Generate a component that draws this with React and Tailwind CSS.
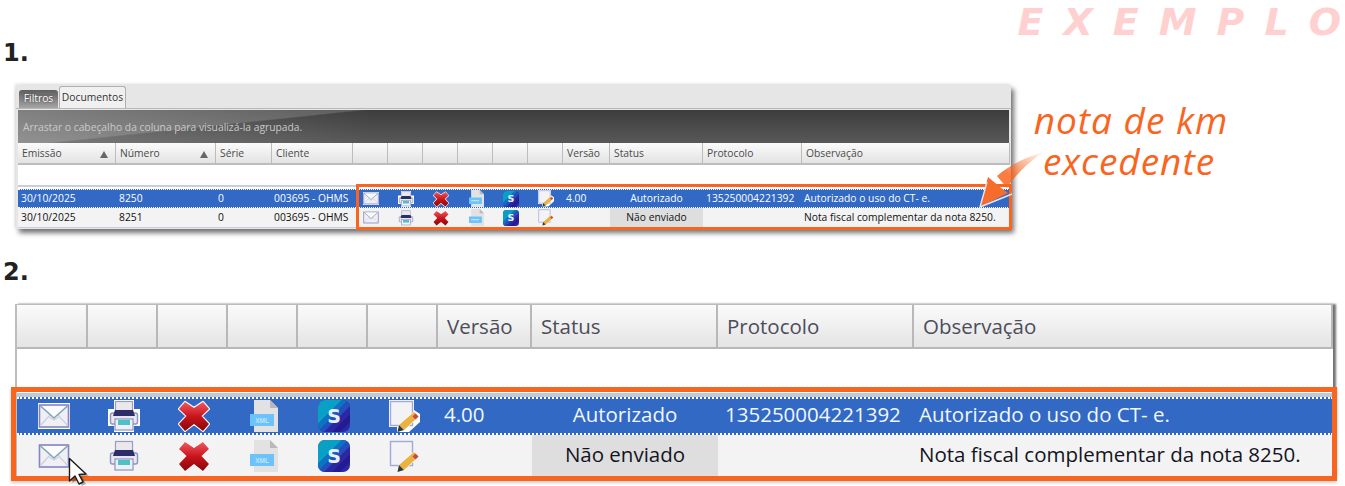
import React from "react";

const FONT = "[font-family:'Open_Sans','Liberation_Sans',sans-serif]";

function Mail({ sel }) {
  return (
    <svg viewBox="0 0 32 26" className="w-full h-auto block">
      {sel && <rect x="0" y="0" width="32" height="26" fill="#fff" />}
      <rect x="1.5" y="2" width="29" height="22" fill="#f0f0f4" stroke="#8583c4" strokeWidth="1.6" />
      <path d="M2 23 L12 12 M30 23 L20 12" stroke="#c9cfe0" strokeWidth="1.2" fill="none" />
      <path d="M2.5 3 L16 15 L29.5 3" stroke="#7fa6b8" strokeWidth="1.6" fill="#fbfbfb" />
      <path d="M11 14 L16 17 L21 14" stroke="#d0d0e0" strokeWidth="1.4" fill="none" />
    </svg>
  );
}

function Printer({ sel }) {
  return (
    <svg viewBox="0 0 32 32" className="w-full h-auto block">
      {sel && <path d="M6 0 H26 V9 H32 V26 H26 V32 H6 V26 H0 V9 H6 Z" fill="#fff" />}
      <rect x="7.5" y="1.5" width="17" height="13" fill="#e9e9ec" stroke="#9a9cc4" strokeWidth="1.2" />
      <rect x="2.5" y="13" width="27" height="11" rx="2" fill="#e6e6ee" stroke="#8f93c2" strokeWidth="1.4" />
      <path d="M7 10 H25 L27 16 H5 Z" fill="#2c2e6a" />
      <rect x="7" y="19" width="18" height="11" fill="#eef0f4" stroke="#8f93c2" strokeWidth="1.2" />
      <rect x="10" y="20" width="12" height="5" fill="#4cc2c6" />
    </svg>
  );
}

function Cross({ sel }) {
  return (
    <svg viewBox="0 0 32 32" className="w-full h-auto block">
      <defs>
        <linearGradient id={sel ? "xa" : "xb"} x1="0" y1="0" x2="0" y2="1" gradientUnits="objectBoundingBox">
          <stop offset="0" stopColor="#f0585e" />
          <stop offset="0.5" stopColor="#c9141c" />
          <stop offset="1" stopColor="#860808" />
        </linearGradient>
      </defs>
      <path
        d="M7 2 L16 8 L25 2 L31 9 L23.5 16 L31 24 L25 31 L16 24 L7 31 L1 24 L8.5 16 L1 9 Z"
        fill={`url(#${sel ? "xa" : "xb"})`}
        stroke="#fff"
        strokeWidth={sel ? "2.2" : "1.2"}
        strokeLinejoin="round"
        paintOrder="stroke"
      />
    </svg>
  );
}

function XmlDoc({ big }) {
  return (
    <svg viewBox="0 0 28 32" className="w-full h-auto block">
      <path d="M4 0 H20 L28 8 V32 H4 Z" fill="#e2e2e2" />
      <path d="M20 0 L28 8 H20 Z" fill="#b9b9b9" />
      <rect x="0" y="14" width="24" height="12" fill="#6cc2fa" />
      {big && (
        <text x="12" y="22.5" textAnchor="middle" fontSize="6.5" fontWeight="700" fill="#bfe5fd" fontFamily="Liberation Sans, sans-serif">
          XML
        </text>
      )}
      {!big && <rect x="4" y="19" width="15" height="2" fill="#c6e8fd" />}
    </svg>
  );
}

function SBadge({ id }) {
  return (
    <svg viewBox="0 0 32 32" className="w-full h-auto block">
      <defs>
        <clipPath id={id}>
          <rect x="0" y="0" width="32" height="32" rx="7" />
        </clipPath>
      </defs>
      <g clipPath={`url(#${id})`}>
        <rect width="32" height="32" fill="#2b28a6" />
        <path d="M0 0 H24 L0 24 Z" fill="#0aa0c6" />
        <path d="M24 0 H30 L0 32 V24 Z" fill="#0d74c4" />
        <path d="M30 0 H32 V6 L6 32 H0 Z" fill="#2350bd" />
        <path d="M32 14 L14 32 H22 L32 22 Z" fill="#241a92" />
      </g>
      <text x="16" y="22.5" textAnchor="middle" fontSize="19" fontWeight="700" fill="#e8f2ff" fontFamily="DejaVu Sans, sans-serif">
        S
      </text>
    </svg>
  );
}

function NoteIcon({ sel }) {
  return (
    <svg viewBox="0 0 31 32" className="w-full h-auto block">
      {sel && <path d="M0 0 H25 V10 L31 14 V22 L20 32 H8 V27 H0 Z" fill="#fff" />}
      {!sel && <path d="M1 1 H24 V26 H1 Z" fill="#fff" />}
      <rect x="1.5" y="1.5" width="22" height="24" fill="#f3f3f6" stroke="#a3a7da" strokeWidth="1.4" />
      <path d="M25 12 L29.5 16.5 L15 30 L10 25 Z" fill="#ecb23f" stroke="#fff" strokeWidth="1.2" paintOrder="stroke" />
      <path d="M26.5 13.5 L29.5 16.5 L26.5 19.5 L23.5 16.5 Z" fill="#c6484a" />
      <path d="M10 25 L15 30 L8.5 32 Z" fill="#2f3a34" />
    </svg>
  );
}

function Icons({ sel, big, row }) {
  const cell = big
    ? "flex items-center justify-center pl-1 border-r-2 border-transparent"
    : "flex items-center justify-center pl-[2px] border-r border-transparent";
  const sizes = big
    ? { mail: "w-[32px]", pr: "w-[32px]", x: "w-[32px]", doc: "w-[28px]", s: "w-[32px]", n: "w-[31px]" }
    : { mail: "w-[16px]", pr: "w-[16px]", x: "w-[16px]", doc: "w-[15px]", s: "w-[16px]", n: "w-[16px]" };
  return (
    <>
      <div className={cell}><div className={sizes.mail}><Mail sel={sel} /></div></div>
      <div className={cell}><div className={sizes.pr}><Printer sel={sel} /></div></div>
      <div className={cell}><div className={sizes.x}><Cross sel={sel} /></div></div>
      <div className={cell}><div className={sizes.doc}><XmlDoc big={big} /></div></div>
      <div className={cell}><div className={sizes.s}><SBadge id={`s-${big ? "b" : "s"}-${row}`} /></div></div>
      <div className={cell}><div className={sizes.n}><NoteIcon sel={sel} /></div></div>
    </>
  );
}

const HEAD_S = "h-[22px] flex items-center pl-[4px] pt-[2px] bg-gradient-to-b from-[#fbfbfb] to-[#e3e3e3] border-r border-r-[#bcbcbc] border-b-2 border-b-[#bdbdbd] text-[#4a4a4a] overflow-hidden whitespace-nowrap";
const HEAD_B = "h-[44px] flex items-center pl-[9px] bg-gradient-to-b from-[#fbfbfb] to-[#e4e4e4] border-r-2 border-r-[#b8b8b8] border-b-2 border-b-[#b8b8b8] text-[#4d4d5a] text-[20.5px] whitespace-nowrap";

function SmallHead({ children, sort }) {
  return (
    <div className={`${HEAD_S} justify-between pr-[7px]`}>
      <span>{children}</span>
      {sort && <span className="w-0 h-0 border-x-[4px] border-x-transparent border-b-[7px] border-b-[#666]" />}
    </div>
  );
}

function SmallWindow() {
  const cols = "grid grid-cols-[98px_100px_56px_81px_35px_35px_35px_35px_35px_35px_47px_93px_99px_1fr]";
  const rowBase = `${cols} items-stretch text-[10.3px] leading-none`;
  const c = "flex items-center whitespace-nowrap overflow-hidden";
  return (
    <section className={`ml-[16px] w-[995px] h-[144px] bg-[#e6e6e6] shadow-[3px_4px_5px_rgba(0,0,0,0.55),-1px_-1px_3px_rgba(0,0,0,0.12)] ${FONT}`}>
      <div className="h-[24px] pl-[3px] flex items-end gap-[1px] text-[10.3px] border-b border-b-[#b8b8b8]">
        <div className="w-[39px] h-[18px] rounded-t-[3px] bg-gradient-to-b from-[#5f5f5f] to-[#a5a5a5] text-white flex items-center justify-center [text-shadow:0_0_2px_#333]">Filtros</div>
        <div className="w-[67px] h-[22px] rounded-t-[3px] bg-[#f0f0f0] border border-b-0 border-[#b0b0b0] text-[#333] flex items-center justify-center">Documentos</div>
      </div>
      <div className="mx-[2px] mt-[1px] h-[33px] bg-[linear-gradient(354deg,transparent_73%,rgba(255,255,255,0.16)_74%,rgba(255,255,255,0.16)_100%),linear-gradient(90deg,rgba(255,255,255,0.22)_0%,rgba(255,255,255,0)_36%),linear-gradient(180deg,#3d3d3d_0%,#585858_100%)] text-[#c9c9c9] text-[10.3px] flex items-center pl-[5px] pt-[2px]">
        Arrastar o cabeçalho da coluna para visualizá-la agrupada.
      </div>
      <div className="ml-[2px] mr-[1px] bg-white">
        <div className={`${cols} text-[10.3px]`}>
          <SmallHead sort>Emissão</SmallHead>
          <SmallHead sort>Número</SmallHead>
          <SmallHead>Série</SmallHead>
          <SmallHead>Cliente</SmallHead>
          <SmallHead /><SmallHead /><SmallHead /><SmallHead /><SmallHead /><SmallHead />
          <SmallHead>Versão</SmallHead>
          <SmallHead>Status</SmallHead>
          <SmallHead>Protocolo</SmallHead>
          <SmallHead>Observação</SmallHead>
        </div>
        <div className="h-[22px] bg-white border-b-[2px] border-b-[#c9ced8]" />
        <div className={`${rowBase} h-[19px] mt-[2px] bg-[#3169c4] text-white border-y border-dotted border-y-white`}>
          <div className={`${c} pl-[3px]`}>30/10/2025</div>
          <div className={`${c} pl-[3px]`}>8250</div>
          <div className={`${c} pl-[2px]`}>0</div>
          <div className={`${c} pl-[2px]`}>003695 - OHMS</div>
          <Icons sel row="1" />
          <div className={`${c} pl-[3px]`}>4.00</div>
          <div className={`${c} justify-center`}>Autorizado</div>
          <div className={`${c} pl-[3px]`}>135250004221392</div>
          <div className={`${c} pl-[2px]`}>Autorizado o uso do CT- e.</div>
        </div>
        <div className={`${rowBase} h-[20px] bg-[#f3f3f3] text-[#111] border-b border-b-[#c9d0dc]`}>
          <div className={`${c} pl-[3px]`}>30/10/2025</div>
          <div className={`${c} pl-[3px]`}>8251</div>
          <div className={`${c} pl-[2px]`}>0</div>
          <div className={`${c} pl-[2px]`}>003695 - OHMS</div>
          <Icons row="2" />
          <div className={c} />
          <div className={`${c} justify-center bg-[#dedede]`}>Não enviado</div>
          <div className={c} />
          <div className={`${c} pl-[2px]`}>Nota fiscal complementar da nota 8250.</div>
        </div>
      </div>
    </section>
  );
}

function BigTable() {
  const cols = "grid grid-cols-[71px_70px_70px_70px_70px_70px_94px_186px_196px_1fr]";
  const rowBase = `${cols} items-stretch text-[20.5px] leading-none`;
  const c = "flex items-center whitespace-nowrap overflow-hidden";
  return (
    <section className={`ml-[15px] w-[1318px] h-[172px] bg-white border-l-2 border-l-[#bdbdbd] shadow-[3px_0_2px_rgba(0,0,0,0.55)] ${FONT}`}>
      <div className={`${cols} border-t border-t-[#bcbcbc]`}>
        <div className={HEAD_B} /><div className={HEAD_B} /><div className={HEAD_B} /><div className={HEAD_B} /><div className={HEAD_B} /><div className={HEAD_B} />
        <div className={HEAD_B}>Versão</div>
        <div className={HEAD_B}>Status</div>
        <div className={HEAD_B}>Protocolo</div>
        <div className={HEAD_B}>Observação</div>
      </div>
      <div className="h-[48px] bg-white border-b-[4px] border-b-[#c4c8d0]" />
      <div className={`${rowBase} h-[38px] bg-[#3169c4] text-[#f2f6ff] border-y-2 border-dotted border-y-white`}>
        <Icons sel big row="3" />
        <div className={`${c} pl-[6px] pb-[3px]`}>4.00</div>
        <div className={`${c} justify-center pb-[3px]`}>Autorizado</div>
        <div className={`${c} pl-[7px] pb-[3px]`}>135250004221392</div>
        <div className={`${c} pl-[5px] pb-[3px]`}>Autorizado o uso do CT- e.</div>
      </div>
      <div className={`${rowBase} h-[41px] bg-[#f3f3f3] text-[#14141e]`}>
        <Icons big row="4" />
        <div className={c} />
        <div className={`${c} justify-center bg-[#dedede] pb-[2px]`}>Não enviado</div>
        <div className={c} />
        <div className={`${c} pl-[5px] pb-[2px]`}>Nota fiscal complementar da nota 8250.</div>
      </div>
    </section>
  );
}

export default function App() {
  const heading = "[font-family:'DejaVu_Sans',sans-serif] font-bold text-[24px] leading-none text-[#222] pl-[3px]";
  return (
    <div className="relative w-[1345px] h-[486px] overflow-hidden bg-white">
      <div className="h-[39px] flex justify-end pr-[4px] [font-family:'DejaVu_Sans',sans-serif] font-bold italic text-[38px] leading-[44px] text-[#ffd0d0] whitespace-nowrap">
        <span className="tracking-[20px]">EXEMPL</span>
        <span>O</span>
      </div>
      <h2 className={`${heading} h-[46px] pt-[2px]`}>1.</h2>
      <SmallWindow />
      <h2 className={`${heading} h-[75px] pt-[31px]`}>2.</h2>
      <BigTable />

      {/* annotation boxes over the tables */}
      <div className="absolute left-[356px] top-[184px] w-[656px] h-[46px] border-[3px] border-[#f9651f]" />
      <div className="absolute left-[11px] top-[387px] w-[1326px] h-[94px] border-[5px] border-[#f9651f] shadow-[0_2px_3px_rgba(0,0,0,0.2)]" />

      {/* arrow */}
      <svg className="absolute left-[970px] top-[145px] w-[80px] h-[70px]" viewBox="0 0 80 70">
        <defs>
          <linearGradient id="sw" x1="1" y1="0" x2="0" y2="1">
            <stop offset="0" stopColor="#f9651f" stopOpacity="0" />
            <stop offset="0.7" stopColor="#f9651f" stopOpacity="0.85" />
          </linearGradient>
        </defs>
        <path d="M74 7 C56 12 40 20 27 31 L37 43 C45 30 60 16 74 7 Z" fill="url(#sw)" />
        <path d="M18 32 L10 62 L38 48 L30 42 Z" fill="#f76b2b" />
        <path d="M10 62 L17 37 M10 62 L42 49" stroke="#e6e6ee" strokeWidth="1.4" fill="none" />
      </svg>

      {/* handwritten note */}
      <div className="absolute left-[1033px] top-[99px] w-[196px] text-center [font-family:'Open_Sans',sans-serif] italic font-normal text-[37px] leading-[41px] text-[#f9651f] tracking-[1px] whitespace-nowrap">
        <div>nota de km</div>
        <div className="-ml-[4px]">excedente</div>
      </div>

      {/* mouse cursor */}
      <svg className="absolute left-[66px] top-[456px] w-[24px] h-[30px]" viewBox="0 0 24 30">
        <path d="M4.5 4 V26 L10 21.5 L14 29 L18 27 L14 19.5 L21 19 Z" fill="#000" opacity="0.28" transform="translate(2 1)" />
        <path d="M3.5 2.5 V25 L9 20 L13 28 L17 26 L13 18.5 L20 18 Z" fill="#fff" stroke="#1c1c1c" strokeWidth="1.4" strokeLinejoin="round" />
      </svg>
    </div>
  );
}
